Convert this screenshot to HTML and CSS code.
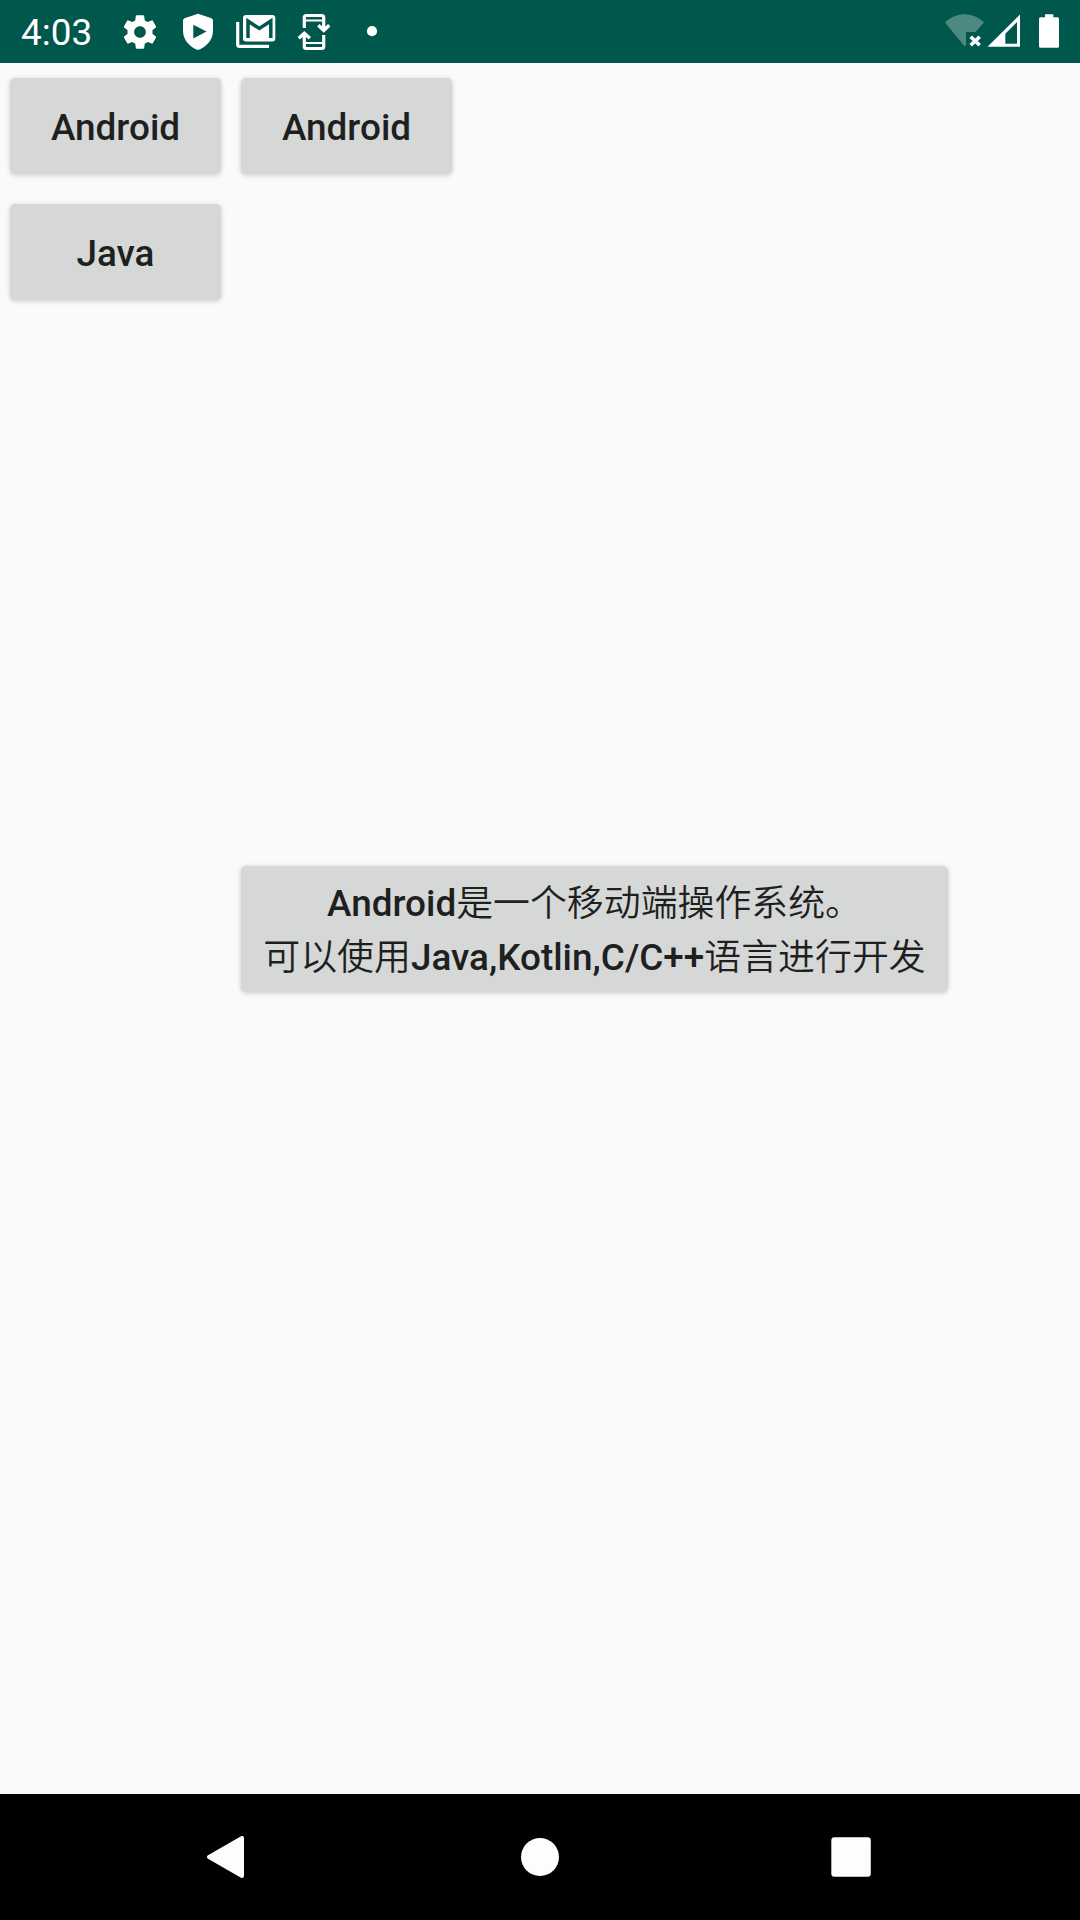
FILE: index.html
```html
<!DOCTYPE html>
<html lang="zh-CN">
<head>
<meta charset="utf-8">
<title>Android</title>
<link rel="stylesheet" href="styles.css">
</head>
<body>
<div class="screen">
  <header class="status">
    <span class="clock">4:03</span>
    <div class="notifications">
      <svg class="icon" viewBox="0 0 24 24"><path d="M19.43 12.98c.04-.32.07-.64.07-.98s-.03-.66-.07-.98l2.11-1.65c.19-.15.24-.42.12-.64l-2-3.46c-.12-.22-.39-.3-.61-.22l-2.49 1c-.52-.4-1.08-.73-1.69-.98l-.38-2.65C14.46 2.18 14.25 2 14 2h-4c-.25 0-.46.18-.49.42l-.38 2.65c-.61.25-1.17.59-1.69.98l-2.49-1c-.23-.09-.49 0-.61.22l-2 3.46c-.13.22-.07.49.12.64l2.11 1.65c-.04.32-.07.65-.07.98s.03.66.07.98l-2.11 1.65c-.19.15-.24.42-.12.64l2 3.46c.12.22.39.3.61.22l2.49-1c.52.4 1.08.73 1.69.98l.38 2.65c.03.24.24.42.49.42h4c.25 0 .46-.18.49-.42l.38-2.65c.61-.25 1.17-.59 1.69-.98l2.49 1c.23.09.49 0 .61-.22l2-3.46c.12-.22.07-.49-.12-.64l-2.11-1.65zM12 15.5c-1.93 0-3.500-1.570-3.500-3.500s1.570-3.500 3.500-3.500 3.500 1.570 3.500 3.500-1.570 3.500-3.500 3.500z"/></svg>
      <svg class="icon" viewBox="178 12 40 40"><path fill-rule="evenodd" d="M198 13.700L211.500 18.300Q213 19 213 20.500V31C213 40.500 205 48 198 50C191 48 183 40.500 183 31V20.500Q183 19 184.500 18.300ZM193.300 24.800V38.500L206.500 31.600Z"/></svg>
      <svg class="icon" viewBox="236 12 40 40"><rect x="243" y="15" width="32.300" height="26.500" rx="3"/><path class="cut" d="M248 38V21L259.300 28.500L270.800 21V38"/><path class="line" d="M237.700 22V44.500Q237.700 46.400 239.600 46.400H269"/></svg>
      <svg class="icon" viewBox="294 12 40 40"><path class="line" d="M304.300 28V17.500Q304.300 15.500 306.300 15.500H321.700Q323.700 15.500 323.700 17.500V28M304.300 35V46.500Q304.300 48.500 306.300 48.500H321.700Q323.700 48.500 323.700 46.500V35"/><path class="thin" d="M304 20.500H324M304 43H324"/><path class="arrow" d="M318.300 25.300L323.800 30.300L329.300 25.300M298.800 38.300L304.300 33.300L309.800 38.300"/></svg>
      <svg class="icon" viewBox="352 12 40 40"><circle cx="372" cy="31.200" r="5.100"/></svg>
    </div>
    <div class="system">
      <svg class="icon" viewBox="944 12 40 40"><path class="dim" d="M945 22.500C956 11.500 973 11.500 984 22.500L975.500 32H966V45L964.500 46.300Z"/><path class="cross" d="M970.700 36.700L979.700 45.300M979.700 36.700L970.700 45.300"/></svg>
      <svg class="icon" viewBox="984 12 40 40"><path fill-rule="evenodd" d="M987.500 46.800L1020 14.500V46.800ZM1005.300 43.700H1017V22L1005.300 33.700Z"/></svg>
      <svg class="icon" viewBox="1029 12 40 40"><path d="M1045 14.300H1053.300V17.300H1057.500Q1059 17.300 1059 18.800V46.200Q1059 47.700 1057.500 47.700H1040.500Q1039 47.700 1039 46.200V18.800Q1039 17.300 1040.500 17.300H1045Z"/></svg>
    </div>
  </header>
  <main class="content">
    <button class="btn">Android</button>
    <button class="btn">Android</button>
    <button class="btn first-column">Java</button>
    <button class="btn intro">Android<span class="han">是一个移动端操作系统。</span><br><span class="han">可以使用</span>Java,Kotlin,C/C++<span class="han">语言进行开发</span></button>
  </main>
  <nav class="nav">
    <svg class="key" viewBox="205 1836 42 42"><path class="back" d="M209 1857L242 1838V1876Z"/></svg>
    <svg class="key home" viewBox="519 1836 42 42"><circle cx="540" cy="1857" r="19"/></svg>
    <svg class="key" viewBox="830 1836 42 42"><rect x="831.300" y="1837.300" width="39.500" height="39.500" rx="3"/></svg>
  </nav>
</div>
</body>
</html>
```
FILE: styles.css
```css
* { box-sizing: border-box; }
body { margin: 0; }

.screen {
  display: flex;
  flex-direction: column;
  width: 1080px;
  height: 1920px;
  background: #fafafa;
  font-family: Roboto, "Noto Sans CJK SC", sans-serif;
  font-size: 36.9px;
  color: #1e1f1f;
}

.status {
  display: flex;
  align-items: center;
  height: 63px;
  padding: 0 11px 0 21px;
  background: #00574b;
  color: #fff;
}
.clock { width: 99px; line-height: 43px; padding-top: 2px; }
.notifications { display: flex; gap: 18px; }
.system { display: flex; margin-left: auto; }
.system .icon:last-child { margin-left: 5px; }
.icon { display: block; width: 40px; height: 40px; fill: #fff; }
.line, .thin, .arrow, .cut, .cross { fill: none; stroke: #fff; stroke-width: 3.2; }
.thin { stroke-width: 2; }
.arrow { stroke-width: 3.5; }
.cut { stroke: #00574b; stroke-width: 3.5; }
.cross { stroke-width: 3.6; }
.dim { fill-opacity: .3; }

.content {
  flex: 1;
  display: grid;
  grid-template-columns: 211px 211px;
  grid-template-rows: 96px 96px 126px;
  column-gap: 20px;
  align-content: start;
  padding: 15px 10px;
}
.btn {
  border: 0;
  padding: 3px 0 0;
  border-radius: 5px;
  background: #d6d7d7;
  box-shadow: 0 1px 5px rgba(0, 0, 0, .2);
  color: inherit;
  font: inherit;
  font-weight: 500;
  line-height: 54px;
  white-space: nowrap;
}
.first-column { grid-column: 1; margin: 30px 0 -30px; }
.intro { grid-area: 3 / 2; width: 707px; margin-top: 596px; height: 126px; }
.han { font-weight: 350; }

.nav {
  display: flex;
  justify-content: space-between;
  align-items: center;
  height: 126px;
  padding: 0 208px 0 205px;
  background: #000;
}
.key { display: block; width: 42px; height: 42px; fill: #fdfdfd; }
.home { margin-left: 3px; }
.back { stroke: #fdfdfd; stroke-width: 4; stroke-linejoin: round; }
```
